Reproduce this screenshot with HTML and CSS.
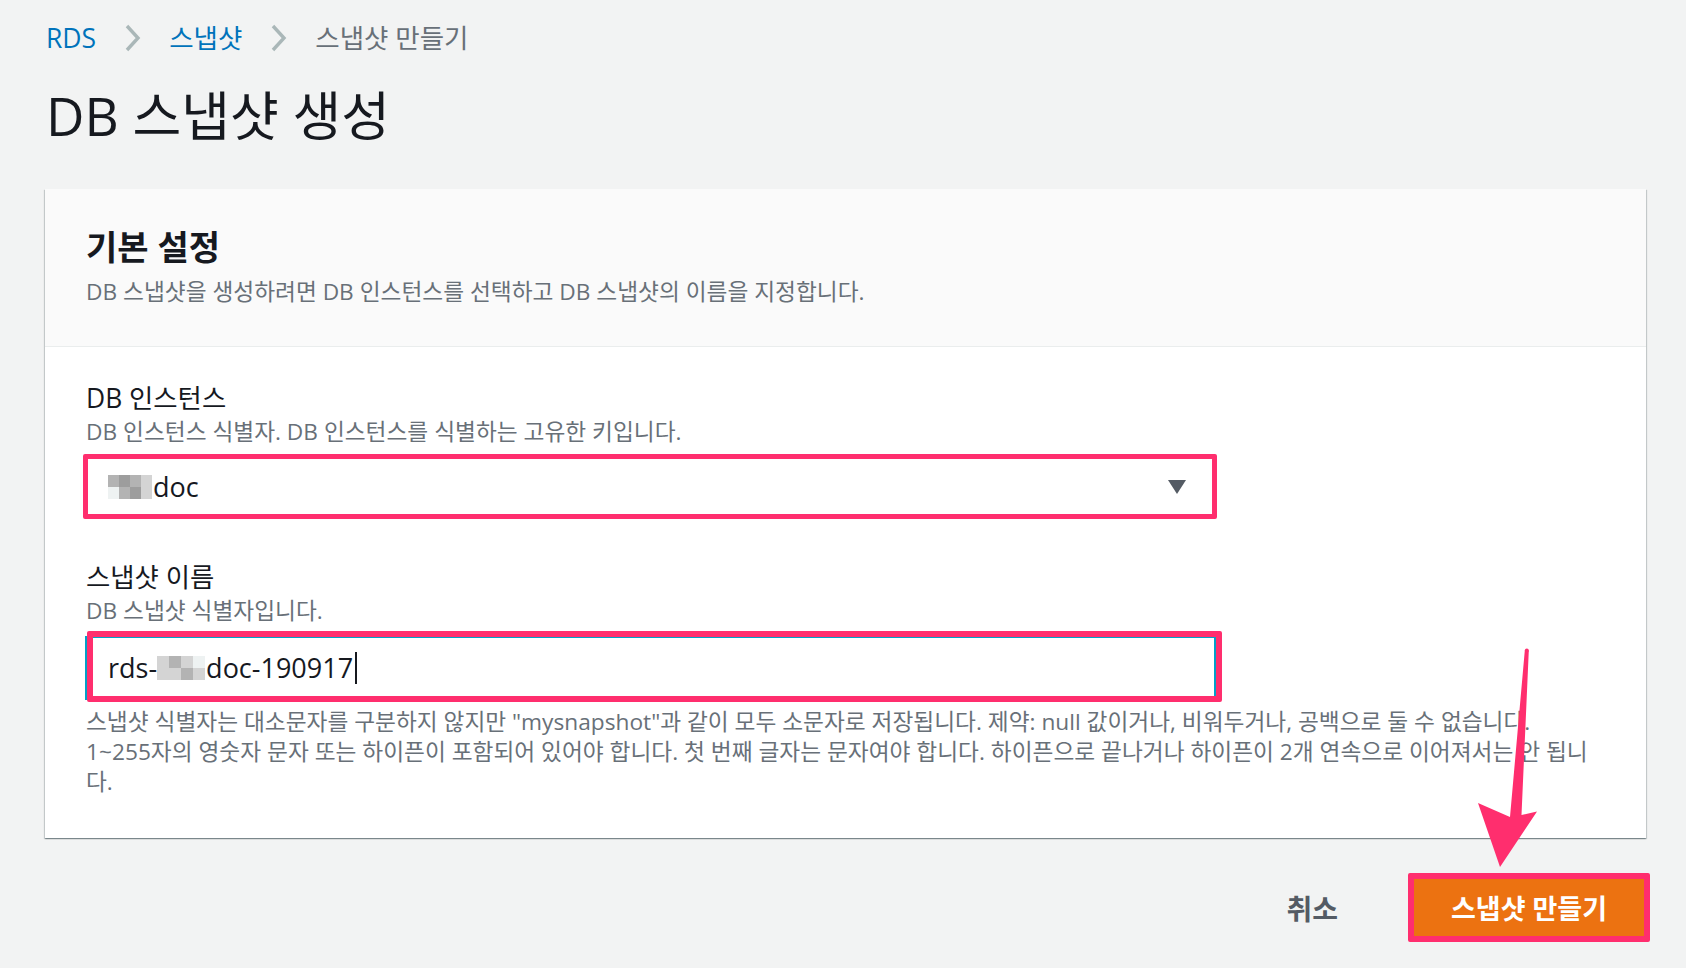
FILE: index.html
```html
<!DOCTYPE html>
<html lang="ko">
<head>
<meta charset="utf-8">
<title>DB 스냅샷 생성</title>
<link rel="stylesheet" href="styles.css">
</head>
<body>
<div class="page">
  <nav class="crumbs">
    <a class="crumb-link" href="#">RDS</a>
    <svg class="chev" viewBox="0 0 17 30"><polyline points="3,3 14,15 3,27"/></svg>
    <a class="crumb-link" href="#">스냅샷</a>
    <svg class="chev" viewBox="0 0 17 30"><polyline points="3,3 14,15 3,27"/></svg>
    <span class="crumb-current">스냅샷 만들기</span>
  </nav>

  <h1 class="title">DB 스냅샷 생성</h1>

  <section class="card">
    <header class="card-head">
      <h2>기본 설정</h2>
      <p>DB 스냅샷을 생성하려면 DB 인스턴스를 선택하고 DB 스냅샷의 이름을 지정합니다.</p>
    </header>
    <div class="card-body">
      <div class="field">
        <div class="label">DB 인스턴스</div>
        <div class="desc">DB 인스턴스 식별자. DB 인스턴스를 식별하는 고유한 키입니다.</div>
        <div class="select">
          <span class="value"><span class="mosaic m-sel"><i class="c2"></i><i class="c3"></i><i class="c2"></i><i class="c1"></i><i class="c0"></i><i class="c2"></i><i class="c3"></i><i class="c1"></i></span>doc</span>
          <svg class="tri" viewBox="0 0 20 16"><polygon points="1,1 19,1 10,15"/></svg>
        </div>
      </div>

      <div class="field field-2">
        <div class="label">스냅샷 이름</div>
        <div class="desc">DB 스냅샷 식별자입니다.</div>
        <div class="input">
          <span class="value">rds-<span class="mosaic m-inp"><i class="c1"></i><i class="c2"></i><i class="c1"></i><i class="c0"></i><i class="c1"></i><i class="c1"></i><i class="c2"></i><i class="c1"></i></span>doc-190917<span class="cursor"></span></span>
        </div>
        <p class="help">스냅샷 식별자는 대소문자를 구분하지 않지만 "mysnapshot"과 같이 모두 소문자로 저장됩니다. 제약: null 값이거나, 비워두거나, 공백으로 둘 수 없습니다.<br>1~255자의 영숫자 문자 또는 하이픈이 포함되어 있어야 합니다. 첫 번째 글자는 문자여야 합니다. 하이픈으로 끝나거나 하이픈이 2개 연속으로 이어져서는 안 됩니<br>다.</p>
      </div>
    </div>
  </section>

  <div class="actions">
    <button class="btn-cancel" type="button">취소</button>
    <button class="btn-primary" type="button">스냅샷 만들기</button>
  </div>
</div>

<svg class="arrow" viewBox="0 0 75 225">
  <circle cx="56.8" cy="5.5" r="2"/>
  <polygon points="54.8,5.5 58.8,5.5 51.5,170 67,166.5 30,222 8,158 40,172"/>
</svg>
</body>
</html>
```

FILE: styles.css
```css
* {
  box-sizing: border-box;
}

html,
body {
  margin: 0;
  padding: 0;
}

body {
  position: relative;
  width: 1686px;
  height: 968px;
  overflow: hidden;
  background: #f2f3f3;
  color: #16191f;
  font-family: "Open Sans", "Noto Sans CJK KR", sans-serif;
}

.page {
  padding: 20px 40px 0 45px;
}

/* breadcrumbs */
.crumbs {
  display: flex;
  align-items: center;
  gap: 28px;
  height: 36px;
  padding-left: 1px;
  font-size: 26.5px;
  line-height: 36px;
}

.crumb-link {
  color: #0073bb;
  text-decoration: none;
}

.crumb-current {
  color: #687078;
}

.chev {
  width: 17px;
  height: 30px;
  fill: none;
  stroke: #aab7b8;
  stroke-width: 3.4;
}

/* title */
.title {
  margin: 30px 0 0 1px;
  height: 60px;
  font-size: 53px;
  line-height: 60px;
  font-weight: 400;
  color: #16191f;
}

/* card */
.card {
  margin-top: 43px;
  background: #fff;
  box-shadow: 0 1px 1px 0 rgba(0, 28, 36, 0.3),
    1px 1px 1px 0 rgba(0, 28, 36, 0.15),
    -1px 1px 1px 0 rgba(0, 28, 36, 0.15);
}

.card-head {
  background: #fafafa;
  border-bottom: 1px solid #eaeded;
  padding: 38px 41px 39px;
}

.card-head h2 {
  margin: 0;
  font-size: 34px;
  line-height: 40px;
  font-weight: 700;
  color: #16191f;
}

.card-head p {
  margin: 10px 0 0;
  font-size: 22.7px;
  line-height: 30px;
  color: #687078;
}

.card-body {
  padding: 34px 41px 41px;
}

.field-2 {
  margin-top: 41px;
}

.label {
  font-size: 26.4px;
  line-height: 34px;
  color: #16191f;
}

.desc {
  margin-top: 2px;
  font-size: 22.7px;
  line-height: 30px;
  color: #687078;
}

/* select (with pink annotation frame) */
.select {
  margin: 7px 0 0 -3px;
  width: 1134px;
  height: 65px;
  border: 5px solid #ff2e6e;
  border-radius: 2px;
  background: #fff;
  display: flex;
  align-items: center;
  justify-content: space-between;
  padding: 0 25px 0 20px;
}

.value {
  display: inline-flex;
  align-items: center;
  font-size: 27px;
  line-height: 36px;
  color: #16191f;
}

.tri {
  width: 20px;
  height: 16px;
  fill: #545b64;
}

/* pixelated redaction */
.mosaic {
  display: inline-grid;
  grid-template-columns: repeat(4, 11px);
  grid-template-rows: repeat(2, 12px);
  margin-right: 1px;
}

.m-inp {
  grid-template-columns: repeat(4, 12px);
  grid-template-rows: repeat(2, 12px);
  margin: 0 1px 0 0;
}

.mosaic i {
  display: block;
}

.c0 { background: #eef2f2; }
.c1 { background: #d4d4d4; }
.c2 { background: #b3b3b3; }
.c3 { background: #9d9d9d; }

/* text input (focused, with pink annotation frame) */
.input {
  position: relative;
  margin: 10px 0 0 -1px;
  width: 1131px;
  height: 64px;
  border: 2px solid #00a1c9;
  background: #fff;
  display: flex;
  align-items: center;
  padding-left: 21px;
}

.input::after {
  content: "";
  position: absolute;
  top: -7px;
  left: 0;
  right: -8px;
  bottom: -4px;
  border: 6px solid #ff2e6e;
  border-radius: 2px;
  pointer-events: none;
}

.cursor {
  display: inline-block;
  width: 2px;
  height: 32px;
  margin-left: 2px;
  background: #16191f;
}

.help {
  margin: 7px 0 0;
  font-size: 22.7px;
  line-height: 30px;
  color: #687078;
}

/* actions */
.actions {
  margin-top: 35px;
  display: flex;
  justify-content: flex-end;
  align-items: center;
  margin-right: -4px;
}

.btn-cancel {
  border: 0;
  background: transparent;
  font-family: inherit;
  font-size: 28px;
  font-weight: 700;
  color: #545b64;
  padding: 0;
  margin-right: 70px;
}

.btn-primary {
  width: 242px;
  height: 69px;
  border: 6px solid #ff2e6e;
  border-radius: 2px;
  background: #ec7211;
  color: #fff;
  font-family: inherit;
  font-size: 27px;
  font-weight: 700;
  padding: 0;
}

/* annotation arrow */
.arrow {
  position: absolute;
  left: 1470px;
  top: 645px;
  width: 75px;
  height: 225px;
  fill: #ff2e6e;
}
```
